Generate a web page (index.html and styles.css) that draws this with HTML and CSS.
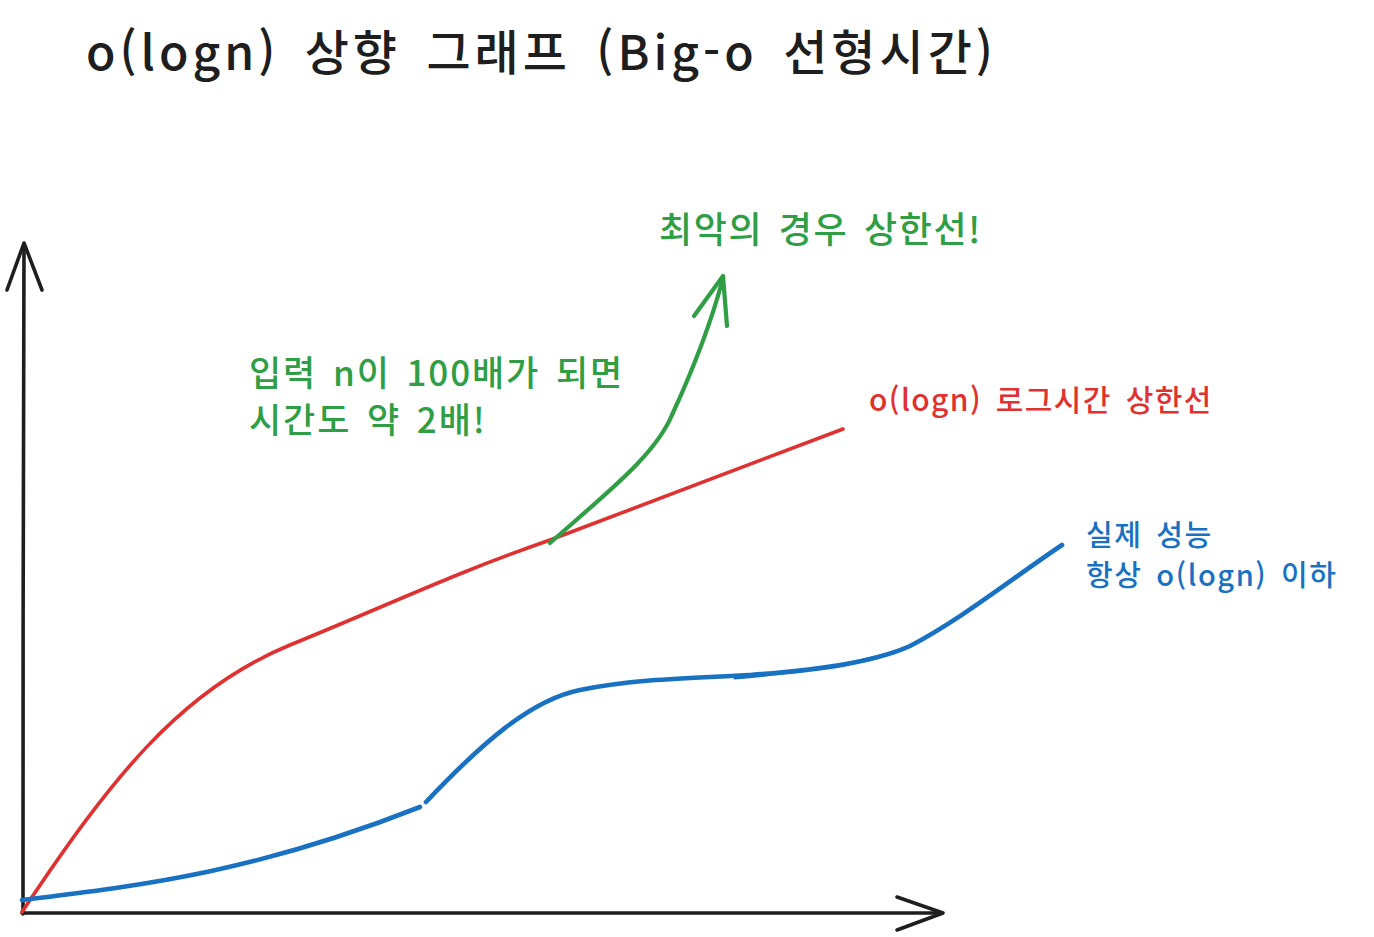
FILE: index.html
```html
<!DOCTYPE html>
<html lang="ko">
<head>
<meta charset="utf-8">
<title>o(logn) 상향 그래프</title>
<link rel="stylesheet" href="styles.css">
</head>
<body>
<div class="canvas">
  <svg class="drawing" width="1374" height="937" viewBox="0 0 1374 937" xmlns="http://www.w3.org/2000/svg">
    <g class="axis">
      <path d="M23,914 C23.5,700 22.5,450 24,245"/>
      <path d="M7,290 L24,243 L42,290"/>
      <path d="M22,913 C300,912.5 650,913.5 941,913"/>
      <path d="M897,897 L943,913 L897,930"/>
    </g>
    <g class="red">
      <path d="M22,912 C110,780 180,690 290,645 S 450,575 550,540 L 843,429"/>
    </g>
    <g class="blue">
      <path d="M22,900 C150,885 260,870 420,807"/>
      <path d="M426,802 C480,745 530,700 580,690 C640,678 700,678 750,675 C820,670 875,662 910,646 C960,620 1010,580 1062,545"/>
      <path class="thin" d="M735,678 C800,672 860,665 905,648"/>
    </g>
    <g class="green">
      <path d="M550,543 C610,490 655,455 672,415 C695,365 712,320 723,278"/>
      <path d="M694,316 L723,276 L727,326"/>
    </g>
  </svg>

  <h1 class="label title">o(logn) 상향 그래프 (Big-o 선형시간)</h1>
  <p class="label worst">최악의 경우 상한선!</p>
  <p class="label input">입력 n이 100배가 되면<br>시간도 약 2배!</p>
  <p class="label upper">o(logn) 로그시간 상한선</p>
  <p class="label actual">실제 성능<br>항상 o(logn) 이하</p>
</div>
</body>
</html>
```

FILE: styles.css
```css
html, body {
  margin: 0;
  padding: 0;
  background: #ffffff;
}

.canvas {
  position: relative;
  width: 1374px;
  height: 937px;
  overflow: hidden;
  font-family: "Noto Sans CJK KR", "Noto Sans", sans-serif;
}

.drawing {
  position: absolute;
  left: 0;
  top: 0;
}

.drawing path {
  fill: none;
  stroke-linecap: round;
  stroke-linejoin: round;
}

.axis path {
  stroke: #1e1e1e;
  stroke-width: 3.6;
}

.red path {
  stroke: #e03131;
  stroke-width: 3.6;
}

.blue path {
  stroke: #1971c2;
  stroke-width: 4.6;
}

.blue path.thin {
  stroke-width: 3;
}

.green path {
  stroke: #2f9e44;
  stroke-width: 4.2;
}

.label {
  position: absolute;
  margin: 0;
  white-space: nowrap;
  font-weight: 500;
}

.title {
  left: 86px;
  top: 21px;
  font-size: 48px;
  line-height: 1.2;
  font-weight: 500;
  color: #1e1e1e;
  letter-spacing: 4px;
  word-spacing: 8px;
}

.worst {
  left: 659px;
  top: 206px;
  font-size: 36px;
  line-height: 1.2;
  color: #2f9e44;
  letter-spacing: 1.6px;
  word-spacing: 4px;
}

.input {
  left: 249px;
  top: 347px;
  font-size: 35px;
  line-height: 47px;
  color: #2f9e44;
  letter-spacing: 1.9px;
  word-spacing: 4px;
}

.upper {
  left: 869px;
  top: 380px;
  font-size: 30px;
  line-height: 1.2;
  color: #e03131;
  letter-spacing: 1.4px;
  word-spacing: 4px;
}

.actual {
  left: 1086px;
  top: 513px;
  font-size: 29px;
  line-height: 40px;
  color: #1971c2;
  letter-spacing: 1.6px;
  word-spacing: 4px;
}
```
